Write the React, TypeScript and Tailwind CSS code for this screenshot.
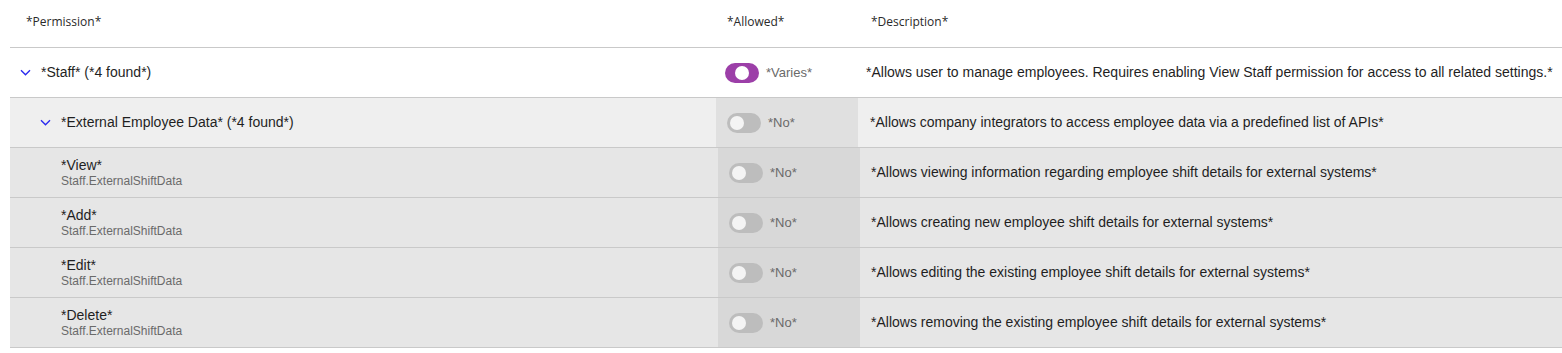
import { ReactNode } from 'react'

const font = { fontFamily: '"Liberation Sans", Arial, sans-serif' }

function Chevron() {
    return (
        <svg width="11" height="7" viewBox="0 0 11 7" className="shrink-0">
            <path d="M1 1.2l4.5 4.5 4.5-4.5" fill="none" stroke="#2b2bef" strokeWidth="1.4" />
        </svg>
    )
}

function Toggle({ state }: { state: 'varies' | 'off' }) {
    if (state === 'varies') {
        return (
            <div className="w-[34px] h-[20px] rounded-full bg-[#9c3fa8] flex items-center justify-center shrink-0">
                <div className="w-[14px] h-[14px] rounded-full bg-white" />
            </div>
        )
    }
    return (
        <div className="w-[34px] h-[20px] rounded-full bg-[#bdbdbd] flex items-center pl-[3px] shrink-0">
            <div className="w-[14px] h-[14px] rounded-full bg-[#f4f4f4]" />
        </div>
    )
}

function Row({ bg, cellBg, first, second, third, children, description, toggle, label }: {
    bg: string
    cellBg: string
    first: string
    second: string
    third: string
    children: ReactNode
    description: string
    toggle: 'varies' | 'off'
    label: string
}) {
    return (
        <div className={`flex h-[50px] border-b border-[#c9c9c9] ${bg}`}>
            <div className={`${first} flex items-center`}>{children}</div>
            <div className={`${second} ${cellBg} flex items-center gap-[7px]`}>
                <Toggle state={toggle} />
                <span className="text-[13px] text-[#6a6a6a]">{label}</span>
            </div>
            <div className={`${third} flex items-center text-[14px] text-[#1f1f1f]`}>{description}</div>
        </div>
    )
}

const leaves = [
    { name: '*View*', desc: '*Allows viewing information regarding employee shift details for external systems*' },
    { name: '*Add*', desc: '*Allows creating new employee shift details for external systems*' },
    { name: '*Edit*', desc: '*Allows editing the existing employee shift details for external systems*' },
    { name: '*Delete*', desc: '*Allows removing the existing employee shift details for external systems*' },
]

export default function App() {
    return (
        <div className="w-[1562px] h-[353px] bg-white overflow-hidden" style={font}>
            <div className="ml-[10px]">
                {/* Header */}
                <div
                    className="flex h-[48px] items-center pb-[4px] border-b border-[#c9c9c9] text-[12px] text-[#2a2a2a]"
                    style={{ fontFamily: '"Open Sans", sans-serif' }}
                >
                    <div className="w-[706px] pl-[16px]">*Permission*</div>
                    <div className="w-[144px] pl-[11px]">*Allowed*</div>
                    <div className="flex-1 pl-[11px]">*Description*</div>
                </div>

                {/* Staff group */}
                <Row
                    bg="bg-white"
                    cellBg="bg-white"
                    first="w-[706px] pl-[10px]"
                    second="w-[142px] pl-[9px]"
                    third="flex-1 pl-[8px]"
                    toggle="varies"
                    label="*Varies*"
                    description="*Allows user to manage employees. Requires enabling View Staff permission for access to all related settings.*"
                >
                    <div className="flex items-center gap-[10px] text-[14px] text-[#1f1f1f]">
                        <Chevron />
                        <span>*Staff* (*4 found*)</span>
                    </div>
                </Row>

                {/* External Employee Data */}
                <Row
                    bg="bg-[#efefef]"
                    cellBg="bg-[#e0e0e0]"
                    first="w-[706px] pl-[30px]"
                    second="w-[142px] pl-[11px]"
                    third="flex-1 pl-[12px]"
                    toggle="off"
                    label="*No*"
                    description="*Allows company integrators to access employee data via a predefined list of APIs*"
                >
                    <div className="flex items-center gap-[10px] text-[14px] text-[#1f1f1f]">
                        <Chevron />
                        <span>*External Employee Data* (*4 found*)</span>
                    </div>
                </Row>

                {leaves.map((l) => (
                    <Row
                        key={l.name}
                        bg="bg-[#e6e6e6]"
                        cellBg="bg-[#d8d8d8]"
                        first="w-[708px] pl-[51px]"
                        second="w-[142px] pl-[11px]"
                        third="flex-1 pl-[11px]"
                        toggle="off"
                        label="*No*"
                        description={l.desc}
                    >
                        <div className="flex flex-col">
                            <span className="text-[14px] leading-[17px] text-[#1f1f1f]">{l.name}</span>
                            <span className="text-[12px] leading-[15px] text-[#6a6a6a]">Staff.ExternalShiftData</span>
                        </div>
                    </Row>
                ))}
            </div>
        </div>
    )
}
